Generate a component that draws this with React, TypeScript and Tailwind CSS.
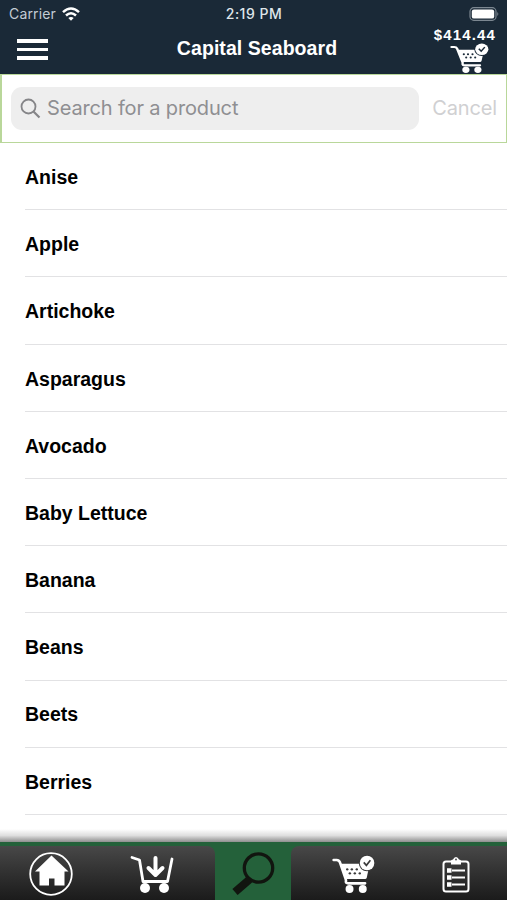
import React from "react";

const products = [
    "Anise",
    "Apple",
    "Artichoke",
    "Asparagus",
    "Avocado",
    "Baby Lettuce",
    "Banana",
    "Beans",
    "Beets",
    "Berries",
];

//Cart with the round check badge, used in the header and in the tab bar
const CartCheck = ({ className, badge }: { className: string; badge: string }) => {
    return (
        <svg viewBox="66 76 130 114" preserveAspectRatio="none" className={className} fill="none">
            <path d="M71 91h9q7 0 10 7l17 49q2 5 1 8q-1 6 7 6h51" stroke="#fff" strokeWidth="8" strokeLinecap="round" strokeLinejoin="round" />
            <path d="M93 102h87l-9 42q-1 4-5 4h-57z" fill="#fff" />
            <g fill={badge}>
                <circle cx="112" cy="119" r="3.6" />
                <circle cx="126" cy="119" r="3.6" />
                <circle cx="141" cy="119" r="3.6" />
                <circle cx="120" cy="131" r="3.6" />
                <circle cx="135" cy="131" r="3.6" />
                <circle cx="150" cy="131" r="3.6" />
            </g>
            <circle cx="172" cy="100" r="25" fill={badge} />
            <circle cx="172" cy="100" r="22" fill="#fff" />
            <path d="M162 98l8 9l12-15" stroke={badge} strokeWidth="5" />
            <circle cx="119" cy="178" r="12" fill="#fff" />
            <circle cx="159" cy="178" r="12" fill="#fff" />
        </svg>
    );
};

const StatusBar = () => {
    return (
        <div className="grid h-[27px] grid-cols-[1fr_auto_1fr] items-center pl-[9px] pr-[8px] font-['Inter'] text-[#dfe5ea]">
            <div className="flex items-center gap-[6px]">
                <span className="text-[14px] leading-none tracking-[0.15px] text-[#c3ccd4]">Carrier</span>
                <svg viewBox="0 0 18 14" className="h-[14px] w-[18px]" fill="none" stroke="#fff" strokeWidth="2.5">
                    <path d="M1 5.2Q9-2.200 17 5.200" />
                    <path d="M4 8.500Q9 3.900 14 8.500" />
                    <path d="M6.300 11L9 13.800L11.700 11Q9 8.800 6.300 11z" fill="#fff" stroke="none" />
                </svg>
            </div>
            <span className="pt-px text-center text-[14px] font-medium leading-none tracking-[0.5px]">2:19 PM</span>
            <svg viewBox="0 0 31 14" className="h-[14px] w-[31px] justify-self-end" fill="none">
                <rect x="2" y=".7" width="26" height="12.600" rx="3.800" stroke="#7c8791" strokeWidth="1.200" />
                <rect x="3.800" y="2.400" width="22.400" height="9.200" rx="2.200" fill="#fff" />
                <path d="M29.300 5q2 2 0 4z" fill="#7c8791" />
            </svg>
        </div>
    );
};

const Header = () => {
    return (
        <header className="h-[74px] bg-[#1a2937]">
            <StatusBar />
            <div className="grid h-[47px] grid-cols-[1fr_auto_1fr] items-start">
                <div className="ml-[17px] mt-[12px] flex w-[31px] flex-col gap-[5px]">
                    <span className="h-[3.500px] bg-white" />
                    <span className="h-[3.500px] bg-white" />
                    <span className="h-[3.500px] bg-white" />
                </div>
                <h1 className="mt-[10px] pl-[7px] text-[19.500px] font-bold leading-[22px] tracking-[0.06px] text-white">Capital Seaboard</h1>
                <div className="mr-[11px] flex flex-col items-end">
                    <span className="text-[15px] font-bold leading-[16px] tracking-[1.150px] text-white">$414.44</span>
                    <CartCheck className="mr-[7px] h-[30px] w-[39px]" badge="#1a2937" />
                </div>
            </div>
        </header>
    );
};

const SearchBar = () => {
    return (
        <div className="flex h-[69px] items-center border border-l-2 border-[#b9d79a] pl-[9px] pr-[9px] font-['Inter'] text-[20px] tracking-[-0.150px]">
            <div className="flex h-[43px] w-[408px] items-center gap-[6px] rounded-[11px] bg-[#eeeeee] pl-[9px] text-[#8f8f92]">
                <svg viewBox="0 0 21 21" className="h-[21px] w-[21px]" fill="none" stroke="#858588" strokeWidth="1.800">
                    <circle cx="8.500" cy="8.500" r="7" />
                    <path d="M13.500 13.500l6 6" strokeWidth="2.200" />
                </svg>
                <span className="pb-[2px]">Search for a product</span>
            </div>
            <span className="ml-auto pb-[2px] text-[#d0d0d2]">Cancel</span>
        </div>
    );
};

const TabBar = () => {
    return (
        <nav className="mt-auto">
            <div className="h-[13px] bg-linear-to-b from-white via-[#dedede] to-[#8f8f8f]" />
            <div className="flex h-[58px] gap-[76px] bg-[#24613a] pt-[4px]">
                <div className="w-[215px] rounded-tr-[8px] bg-linear-to-b from-[#484848] to-[#1b1b1b]" />
                <div className="flex-1 rounded-tl-[8px] bg-linear-to-b from-[#484848] to-[#1b1b1b]" />
            </div>
            <div className="relative -mt-[54px] grid h-[54px] grid-cols-5 items-center justify-items-center">
                <svg viewBox="0 0 44 44" className="mt-[2px] h-[44px] w-[44px]" fill="none">
                    <circle cx="22" cy="22" r="20.800" stroke="#fff" strokeWidth="1.800" />
                    <path d="M22.500 3.500L6 19.500H10.500V33.500H20V26.500H25.500V33.500H35.500V19.500H39.500z" fill="#fff" />
                </svg>
                <svg viewBox="0 0 44 40" className="mt-px mr-px h-[40px] w-[44px]" fill="none" stroke="#fff">
                    <path d="M2 3.500L9.500 6L13 27.500H37.500L42 5" strokeWidth="2.800" strokeLinecap="round" strokeLinejoin="round" />
                    <path d="M25.500 4V20M18.500 14L25.500 21L32.500 14" strokeWidth="4" strokeLinecap="round" strokeLinejoin="round" />
                    <circle cx="15" cy="34" r="5" fill="#fff" stroke="none" />
                    <circle cx="34" cy="34" r="5" fill="#fff" stroke="none" />
                </svg>
                <svg viewBox="0 0 44 44" className="h-[44px] w-[44px]" fill="none" stroke="#11150f">
                    <circle cx="27.500" cy="17" r="14.200" strokeWidth="3.300" />
                    <path d="M18.500 27L16 30" strokeWidth="5" />
                    <path d="M18.500 28.500L4 41" strokeWidth="8" />
                </svg>
                <CartCheck className="mr-[2px] mt-[2px] h-[38px] w-[43px]" badge="#3a3a3a" />
                <svg viewBox="0 0 28 37" className="mt-[2px] h-[37px] w-[28px]" fill="none" stroke="#fff">
                    <rect x="1.500" y="5.500" width="25" height="30" rx="2.500" strokeWidth="2" />
                    <path d="M9 8.500V5Q9 3.500 11 3.500Q12 1 14 1T17 3.500Q19 3.500 19 5V8.500z" fill="#fff" stroke="none" />
                    <circle cx="14" cy="3.500" r=".9" fill="#444" stroke="none" />
                    <path d="M10 14.500H23M10 21.500H23M10 28.500H23" strokeWidth="1.800" />
                    <path d="M5 14.500H9.500M5 21.500H9.500M5 28.500H9.500" strokeWidth="4.500" />
                </svg>
            </div>
        </nav>
    );
};

const App = () => {
    return (
        <main className="flex h-[900px] w-[507px] flex-col overflow-hidden bg-white font-['Liberation_Sans',sans-serif]">
            <Header />
            <SearchBar />
            <ul>
                {products.map((product) => (
                    <li key={product} className="ml-[25px] flex h-[67.200px] items-center border-b border-[#e2e2e4] pt-[3px] text-[19.500px] font-bold text-black">
                        {product}
                    </li>
                ))}
            </ul>
            <TabBar />
        </main>
    );
};

export default App;
